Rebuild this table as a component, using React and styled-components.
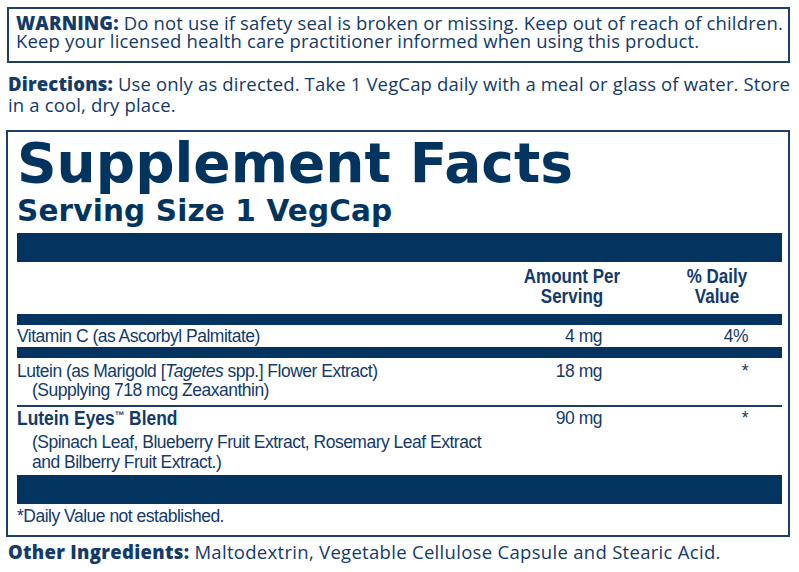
import React from 'react';
import styled, { createGlobalStyle } from 'styled-components';

const ink = '#133a68';
const navy = '#03345f';
const rule = '#1d3d6b';
const humanist = '"Open Sans", "Noto Sans", Lato, sans-serif';
const plain = '"Liberation Sans", Arial, sans-serif';
const heavy = '"DejaVu Sans", "Liberation Sans", sans-serif';

const Global = createGlobalStyle`
  html, body { margin: 0; padding: 0; background: #fff; }
  body { font-family: ${humanist}; color: ${ink}; }
`;

const Page = styled.div`
  width: 799px;
  height: 572px;
  box-sizing: border-box;
  padding: 7px 9px 0 6px;
  display: flex;
  flex-direction: column;
  overflow: hidden;
`;

const Warning = styled.div`
  margin-left: 1px;
  border: 2px solid ${rule};
  padding: 5px 4px 11px 7px;
  font-size: 18.5px;
  line-height: 18px;
  letter-spacing: 0.15px;
  white-space: nowrap;
`;

const Paragraph = styled.p`
  margin: ${p => p.$mt || 0}px 0 ${p => p.$mb || 0}px 2px;
  font-size: 18.5px;
  line-height: ${p => p.$lh || 21}px;
  letter-spacing: ${p => p.$ls ?? 0.15}px;
  white-space: nowrap;
`;

const Label = styled.b`
  font-weight: 800;
`;

const FactsBox = styled.section`
  border: 2px solid ${rule};
  padding: 0 6px 0 9px;
  display: flex;
  flex-direction: column;
`;

const Title = styled.h1`
  margin: 4px 0 0;
  font-family: ${heavy};
  font-weight: 700;
  font-size: 55px;
  line-height: 55px;
  color: ${navy};
`;

const Serving = styled.h2`
  margin: 6px 0 7px;
  font-family: ${heavy};
  font-weight: 700;
  font-size: 29.5px;
  line-height: 29px;
  letter-spacing: 0.15px;
  color: ${navy};
`;

const Bar = styled.div`
  height: ${p => p.$h}px;
  background: ${navy};
`;

const Row = styled.div`
  display: grid;
  grid-template-columns: 1fr 120px 150px;
  padding: ${p => p.$pad || '0'};
  font-family: ${plain};
  font-size: 17.5px;
  letter-spacing: -0.5px;
  line-height: ${p => p.$lh || 20}px;
`;

const HeadCell = styled.div`
  grid-column: ${p => p.$col};
  text-align: center;
  padding-left: ${p => p.$shift || 0}px;
  font-family: ${plain};
  font-weight: 700;
  font-size: 20px;
  line-height: 20px;
  letter-spacing: 0;
  transform: scaleX(0.85);
  transform-origin: calc(50% + ${p => (p.$shift || 0) / 2}px) 50%;
`;

const Name = styled.div`
  grid-column: 1;
`;

const BoldName = styled.div`
  grid-column: 1;
  font-weight: 700;
  font-size: 20px;
  line-height: 22px;
  letter-spacing: 0;
  transform: scaleX(0.87);
  transform-origin: 0 50%;
`;

const Tm = styled.span`
  font-size: 11px;
  line-height: 0;
  vertical-align: 6px;
`;

const Amount = styled.div`
  grid-column: 2;
  text-align: right;
  padding-right: 30px;
`;

const Dv = styled.div`
  grid-column: 3;
  text-align: right;
  padding-right: 34px;
`;

const Sub = styled.div`
  padding-left: 15px;
`;

const SubBlock = styled.div`
  padding: 3px 0 3px 15px;
  font-family: ${plain};
  font-size: 17.5px;
  letter-spacing: -0.5px;
  line-height: 20px;
`;

const Rule = styled.div`
  height: 2px;
  background: ${rule};
`;

const Footnote = styled.div`
  padding: 2px 0 9px;
  font-family: ${plain};
  font-size: 17.5px;
  letter-spacing: -0.5px;
  line-height: 20px;
`;

export default function App() {
  return (
    <>
      <Global />
      <Page>
        <Warning>
          <Label>WARNING:</Label> Do not use if safety seal is broken or missing. Keep out of reach of children.
          <br />
          Keep your licensed health care practitioner informed when using this product.
        </Warning>

        <Paragraph $mt={10} $mb={15}>
          <Label>Directions:</Label> Use only as directed. Take 1 VegCap daily with a meal or glass of water. Store
          <br />
          in a cool, dry place.
        </Paragraph>

        <FactsBox>
          <Title>Supplement Facts</Title>
          <Serving>Serving Size 1 VegCap</Serving>
          <Bar $h={29} />
          <Row $pad="4px 0 8px">
            <HeadCell $col={2}>Amount Per<br />Serving</HeadCell>
            <HeadCell $col={3} $shift={20}>% Daily<br />Value</HeadCell>
          </Row>
          <Bar $h={11} />
          <Row $pad="2px 0 0" $lh={19.7}>
            <Name>Vitamin C (as Ascorbyl Palmitate)</Name>
            <Amount>4 mg</Amount>
            <Dv>4%</Dv>
          </Row>
          <Bar $h={11} />
          <Row $pad="4px 0 4px" $lh={19.5}>
            <Name>
              Lutein (as Marigold [<em>Tagetes</em> spp.] Flower Extract)
              <Sub>(Supplying 718 mcg Zeaxanthin)</Sub>
            </Name>
            <Amount>18 mg</Amount>
            <Dv>*</Dv>
          </Row>
          <Rule />
          <Row $lh={22}>
            <BoldName>Lutein Eyes<Tm>™</Tm> Blend</BoldName>
            <Amount>90 mg</Amount>
            <Dv>*</Dv>
          </Row>
          <SubBlock>
            (Spinach Leaf, Blueberry Fruit Extract, Rosemary Leaf Extract
            <br />
            and Bilberry Fruit Extract.)
          </SubBlock>
          <Bar $h={29} />
          <Footnote>*Daily Value not established.</Footnote>
        </FactsBox>

        <Paragraph $mt={5} $lh={20} $ls={0.3}>
          <Label>Other Ingredients:</Label> Maltodextrin, Vegetable Cellulose Capsule and Stearic Acid.
        </Paragraph>
      </Page>
    </>
  );
}
